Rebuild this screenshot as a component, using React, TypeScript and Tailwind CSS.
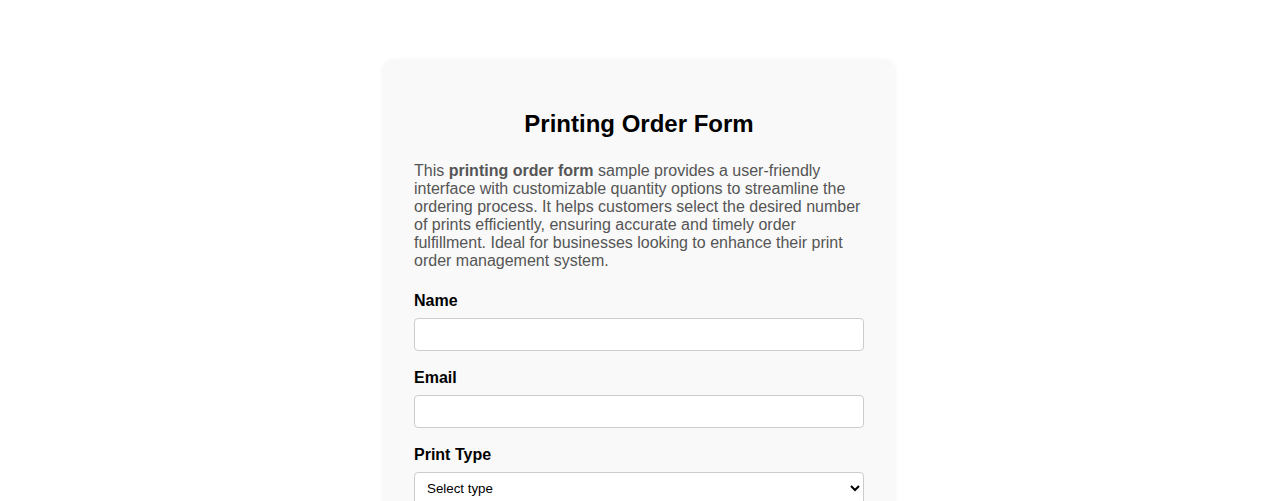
import React from "react";

export default function App() {
  return (
    <div className="min-h-screen bg-white pt-[59px] font-['Liberation_Sans',Arial,sans-serif]">
      <div className="mx-auto w-[514px] rounded-xl bg-[#f9f9f9] px-8 pt-[51px] pb-8 shadow-[0_0_4px_rgba(0,0,0,0.03)]">
        <h1 className="text-center text-[24px] leading-[28px] font-bold text-black">
          Printing Order Form
        </h1>
        <p className="mt-[24px] text-[16px] leading-[18px] text-[#555]">
          This <strong className="font-bold">printing order form</strong> sample
          provides a user-friendly interface with customizable quantity options
          to streamline the ordering process. It helps customers select the
          desired number of prints efficiently, ensuring accurate and timely
          order fulfillment. Ideal for businesses looking to enhance their print
          order management system.
        </p>
        <form className="mt-[22px] flex flex-col">
          <label className="text-[16px] leading-[18px] font-bold text-black">Name</label>
          <input
            type="text"
            className="mt-[8px] h-[33px] w-full rounded border border-[#ccc] bg-white px-2"
          />
          <label className="mt-[18px] text-[16px] leading-[18px] font-bold text-black">Email</label>
          <input
            type="email"
            className="mt-[8px] h-[33px] w-full rounded border border-[#ccc] bg-white px-2"
          />
          <label className="mt-[18px] text-[16px] leading-[18px] font-bold text-black">Print Type</label>
          <select className="mt-[8px] h-[33px] w-full rounded border border-[#ccc] bg-white px-2 text-[13.33px] text-black">
            <option>Select type</option>
            <option>Flyers</option>
            <option>Posters</option>
            <option>Business Cards</option>
          </select>
        </form>
      </div>
    </div>
  );
}
